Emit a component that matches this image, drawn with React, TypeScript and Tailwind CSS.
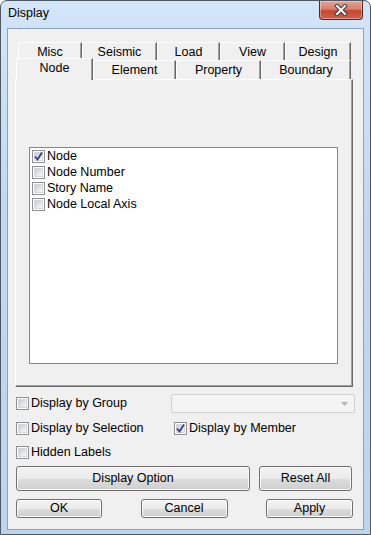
import React from 'react';

function CheckBox({ checked = false }: { checked?: boolean }) {
  return (
    <span className="flex h-[13px] w-[13px] shrink-0 items-center justify-center border border-[#8e8f8f] bg-white">
      <span className="relative flex h-[9px] w-[9px] items-center justify-center bg-gradient-to-br from-[#c9ccd1] to-[#f7f7f7] border border-[#d4d6d9]">
        {checked && (
          <svg width="11" height="11" viewBox="0 0 11 11" className="absolute left-[-2px] top-[-2px]">
            <path d="M2 5.5 L4.5 8.5 L9 1.5" fill="none" stroke="#2c3f8c" strokeWidth="1.8" />
          </svg>
        )}
      </span>
    </span>
  );
}

function Check({ label, checked = false }: { label: string; checked?: boolean }) {
  return (
    <div className="flex h-[16px] items-center gap-[2px]">
      <CheckBox checked={checked} />
      <span className="leading-none">{label}</span>
    </div>
  );
}

function Tab({ label, w, selected = false }: { label: string; w: string; selected?: boolean }) {
  return (
    <div
      className={
        'flex shrink-0 items-center justify-center border-l border-t border-r border-l-white border-t-white border-r-[#696969] bg-[#f0f0f0] shadow-[inset_-1px_0_0_#a0a0a0] rounded-tl-[2px] ' +
        w +
        (selected ? ' relative z-10 -mb-px h-[22px] pb-[3px]' : ' h-[19px]')
      }
    >
      {label}
    </div>
  );
}

function Button({ label, w }: { label: string; w: string }) {
  return (
    <div
      className={
        'flex items-center justify-center rounded-[3px] border border-[#707070] shadow-[inset_0_0_0_1px_#fcfcfc] bg-[linear-gradient(#f2f2f2_0%,#ebebeb_50%,#dddddd_50%,#cfcfcf_100%)] ' +
        w
      }
    >
      {label}
    </div>
  );
}

export default function App() {
  return (
    <div className="h-[535px] w-[371px] bg-white font-['Liberation_Sans',Arial,sans-serif] text-[12.5px] text-black">
      <div className="flex h-full w-full flex-col rounded-t-[7px] border border-[#4d5866] bg-[linear-gradient(180deg,#d3e5f8_0%,#c2d8f0_40%,#bcd4ee_100%)]">
        {/* Title bar */}
        <div className="flex h-[27px] items-start justify-between pl-[7px] pr-[7px]">
          <span className="mt-[6px] leading-none">Display</span>
          <div className="flex h-[19px] w-[44px] items-center justify-center rounded-b-[4px] border border-t-0 border-[#5e2218] bg-[linear-gradient(#e3a393_0%,#d7806c_45%,#c5452f_55%,#cf6450_100%)] shadow-[inset_0_0_0_1px_rgba(255,255,255,0.35)]">
            <svg width="14" height="12" viewBox="0 0 14 12">
              <path d="M3 2 L11 10 M11 2 L3 10" stroke="#3a3a3a" strokeWidth="4" strokeLinecap="square" />
              <path d="M3 2 L11 10 M11 2 L3 10" stroke="#ffffff" strokeWidth="2" strokeLinecap="square" />
            </svg>
          </div>
        </div>

        {/* Client area */}
        <div className="mx-[6px] mb-[4px] flex-1 border border-[#8ba3bf] bg-[#f0f0f0]">
          {/* Tabs */}
          <div className="mt-[13px] flex pl-[10px]">
            <Tab label="Misc" w="w-[64px]" />
            <Tab label="Seismic" w="w-[75px]" />
            <Tab label="Load" w="w-[63px]" />
            <Tab label="View" w="w-[65px]" />
            <Tab label="Design" w="w-[66px]" />
          </div>
          <div className="-mt-[3px] flex items-end pl-[8px]">
            <Tab label="Node" w="w-[77px]" selected />
            <Tab label="Element" w="w-[83px]" />
            <Tab label="Property" w="w-[85px]" />
            <Tab label="Boundary" w="w-[90px]" />
          </div>

          {/* Panel */}
          <div className="ml-[7px] h-[308px] w-[338px] border border-l-white border-t-white border-r-[#696969] border-b-[#696969] shadow-[inset_-1px_-1px_0_#a0a0a0] pt-[67px] pl-[13px]">
            <div className="h-[217px] w-[309px] border border-[#828790] bg-white pl-[2px]">
              <Check label="Node" checked />
              <Check label="Node Number" />
              <Check label="Story Name" />
              <Check label="Node Local Axis" />
            </div>
          </div>

          {/* Options */}
          <div className="px-[7px]">
            <div className="mt-[7px] flex h-[19px] items-center">
              <div className="w-[156px] pl-px">
                <Check label="Display by Group" />
              </div>
              <div className="flex h-[19px] w-[184px] items-center justify-end rounded-[2px] border border-[#d0d0d0] bg-[#f4f4f4] pr-[6px]">
                <svg width="7" height="4" viewBox="0 0 7 4">
                  <path d="M0 0 L7 0 L3.5 4 Z" fill="#b4b4b4" />
                </svg>
              </div>
            </div>
            <div className="mt-[7px] flex h-[16px] items-center">
              <div className="w-[159px] pl-px">
                <Check label="Display by Selection" />
              </div>
              <Check label="Display by Member" checked />
            </div>
            <div className="mt-[8px] flex h-[16px] items-center pl-px">
              <Check label="Hidden Labels" />
            </div>
            <div className="mt-[6px] flex gap-[9px] pl-px">
              <Button label="Display Option" w="h-[25px] w-[234px]" />
              <Button label="Reset All" w="h-[25px] w-[93px]" />
            </div>
            <div className="mt-[8px] flex justify-between pl-px pr-[3px]">
              <Button label="OK" w="h-[19px] w-[86px]" />
              <Button label="Cancel" w="h-[19px] w-[87px]" />
              <Button label="Apply" w="h-[19px] w-[87px]" />
            </div>
          </div>
        </div>
      </div>
    </div>
  );
}
